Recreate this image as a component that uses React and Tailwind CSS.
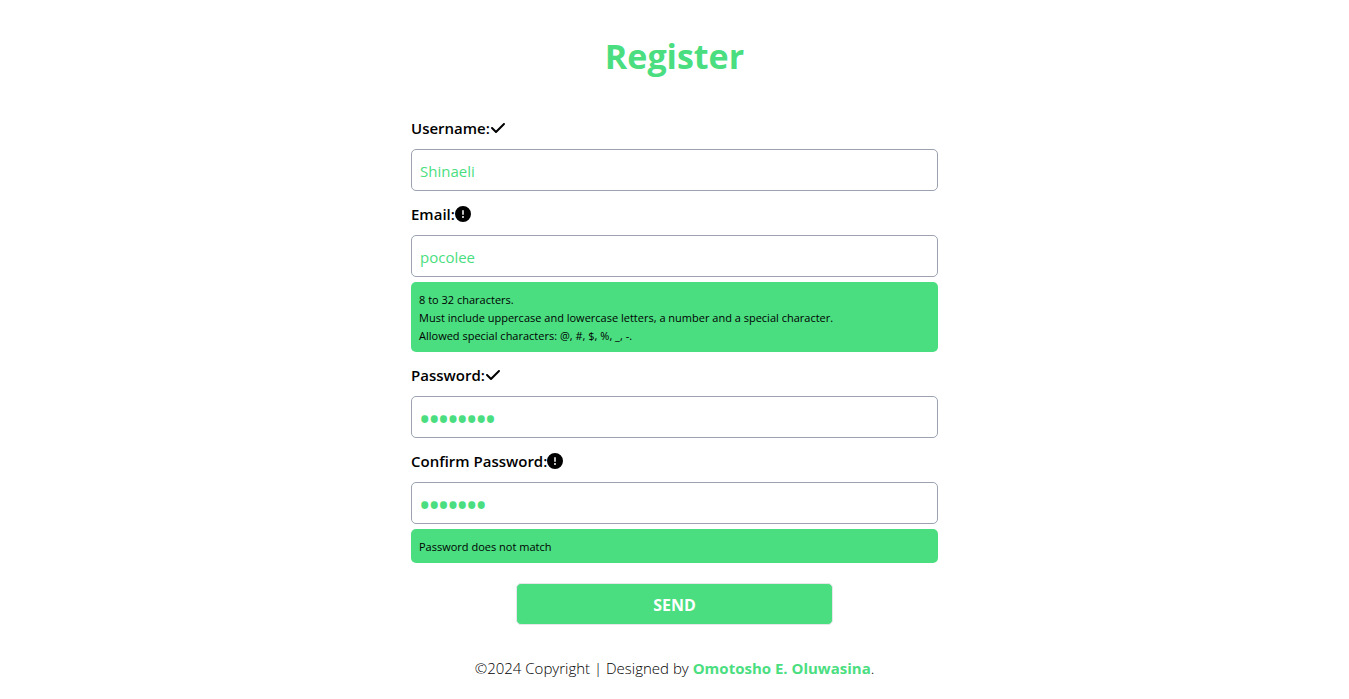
import { FaCheck, FaCircleExclamation } from "react-icons/fa6";

const fields = [
  { id: "username", label: "Username:", type: "text", value: "Shinaeli", valid: true },
  {
    id: "email",
    label: "Email:",
    type: "text",
    value: "pocolee",
    valid: false,
    notes: [
      "8 to 32 characters.",
      "Must include uppercase and lowercase letters, a number and a special character.",
      "Allowed special characters: @, #, $, %, _, -.",
    ],
  },
  { id: "password", label: "Password:", type: "password", value: "password", valid: true },
  {
    id: "confirm",
    label: "Confirm Password:",
    type: "password",
    value: "passwor",
    valid: false,
    notes: ["Password does not match"],
  },
];

function Field({ id, label, type, value, valid, notes }) {
  const Icon = valid ? FaCheck : FaCircleExclamation;
  const textSize = type === "password" ? "text-[25px] font-bold" : "text-[15px]";
  return (
    <div className="flex flex-col">
      <label htmlFor={id} className="flex items-center pt-[11px] pb-[9px] text-[15px] leading-6 font-semibold text-black">
        {label}
        <Icon className="size-4" aria-hidden="true" />
      </label>
      <input
        id={id}
        type={type}
        defaultValue={value}
        className={`h-[42px] w-full rounded-[5px] border border-[#9ca3af] bg-white px-2 pt-0.5 text-[#4ade80] outline-none ${textSize}`}
      />
      {notes && (
        <div className="mt-[5px] rounded-[5px] bg-[#4ade80] px-2 pt-[9px] pb-[7px] text-[11px] leading-[18px] text-black">
          {notes.map((note) => (
            <p key={note}>{note}</p>
          ))}
        </div>
      )}
    </div>
  );
}

export default function App() {
  return (
    <main className="flex flex-col items-center px-4 pt-9 font-['Open_Sans','Noto_Sans',sans-serif] text-[15px]">
      <h1 className="text-[34px] leading-10 font-bold text-[#4ade80]">Register</h1>
      <form className="mt-[29px] flex w-full max-w-[527px] flex-col" onSubmit={(e) => e.preventDefault()}>
        {fields.map((field) => (
          <Field key={field.id} {...field} />
        ))}
        <button
          type="submit"
          className="mt-5 h-[42px] w-3/5 self-center rounded-[5px] border border-gray-200 bg-[#4ade80] pt-0.5 text-base font-bold text-white"
        >
          SEND
        </button>
      </form>
      <footer className="mt-[31px] leading-6 font-light text-black">
        ©2024 Copyright | Designed by{" "}
        <a href="#" className="font-bold text-[#4ade80]">Omotosho E. Oluwasina</a>.
      </footer>
    </main>
  );
}
